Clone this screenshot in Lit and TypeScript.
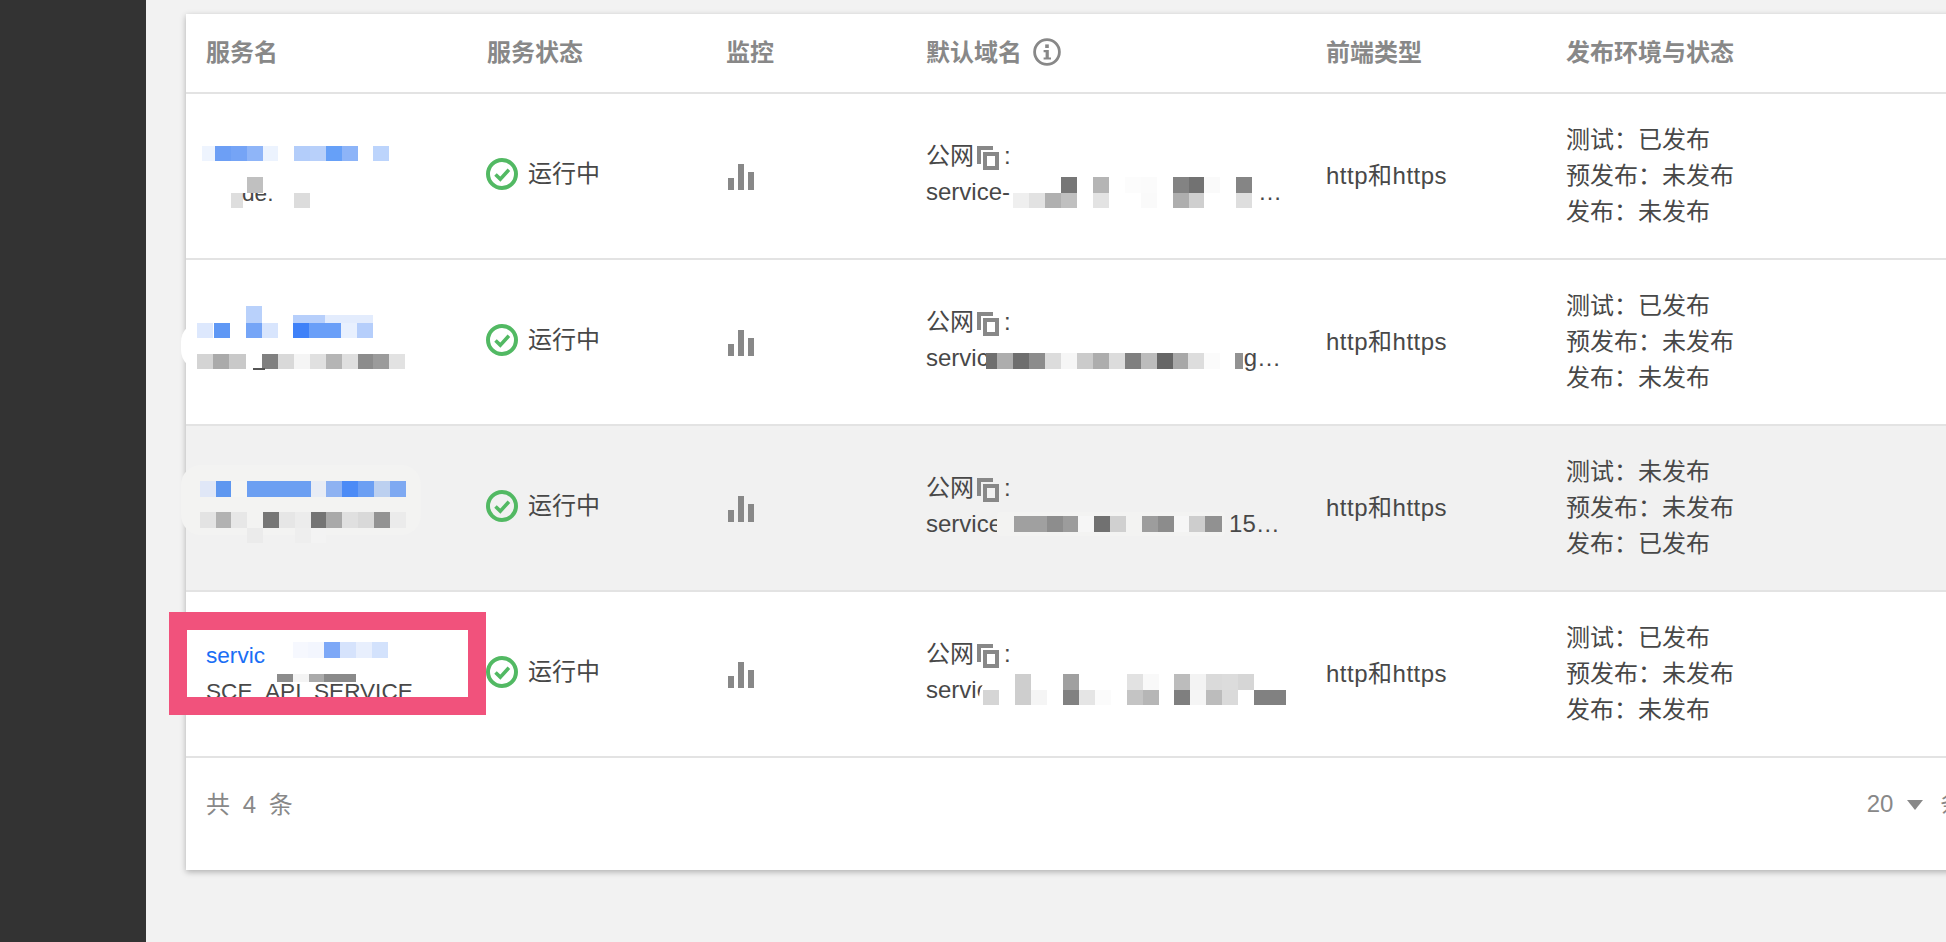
import { LitElement, html, css } from "lit";
import { customElement } from "lit/decorators.js";

type Block = [number, number, number, number, string, string?];

// helper: a strip of same-height mosaic blocks, in page coordinates
const strip = (y: number, h: number, cells: [number, number, string][]): Block[] =>
  cells.map(([x1, x2, c]) => [x1, y, x2 - x1, h, c] as Block);

interface Row {
  top: number;
  state: [string, string, string];
  hover?: boolean;
  domain: string;
  gap: number;
  tail: string;
  name?: unknown;
  blocks: Block[];
  extra?: unknown;
}

const ROWS: Row[] = [
  {
    top: 94,
    state: ["已发布", "未发布", "未发布"],
    domain: "service-",
    gap: 248,
    tail: "…",
    blocks: [
      ...strip(146, 15, [
        [202, 215, "#eef4fe"], [215, 231, "#6d9ff5"], [231, 247, "#75a4f6"], [247, 263, "#8fb5f8"],
        [263, 278, "#ecf3fe"], [294, 310, "#b3cdfa"], [310, 326, "#b8d0fa"], [326, 342, "#66a0f8"],
        [342, 358, "#8db4f8"], [373, 389, "#bcd4fc"],
      ]),
      ...strip(177, 16, [[247, 263, "#c0c0c0"]]),
      ...strip(193, 15, [[231, 243, "#dedede"], [294, 310, "#dcdcdc"]]),
      ...strip(177, 16, [
        [1061, 1077, "#777777"], [1093, 1109, "#b5b5b5"], [1125, 1141, "#fcfcfc"], [1141, 1157, "#fbfbfb"],
        [1173, 1189, "#838383"], [1189, 1204, "#727272"], [1204, 1220, "#fafafa"], [1236, 1252, "#858585"],
      ]),
      ...strip(193, 15, [
        [1013, 1029, "#efefef"], [1029, 1045, "#e2e2e2"], [1045, 1061, "#b0b0b0"], [1061, 1077, "#c0c0c0"],
        [1093, 1109, "#e3e3e3"], [1141, 1157, "#fafafa"], [1173, 1189, "#aeaeae"], [1189, 1204, "#cfcfcf"],
        [1236, 1252, "#dedede"],
      ]),
    ],
    extra: html`<span class="frag" style="left:${242 - 186}px;top:${193 - 94}px">de.</span>`,
  },
  {
    top: 260,
    state: ["已发布", "未发布", "未发布"],
    domain: "servic",
    gap: 255,
    tail: "g…",
    blocks: [
      [181, 322, 40, 48, "#ffffff", "20px"],
      ...strip(306, 17, [[246, 262, "#b9d1fb"]]),
      ...strip(315, 8, [[293, 325, "#b7cffb"], [325, 373, "#e3ecfd"]]),
      ...strip(323, 15, [
        [197, 213, "#dde8fd"], [214, 230, "#5f98f5"], [246, 262, "#75a5f7"], [262, 278, "#d8e5fd"],
        [293, 309, "#3f81f8"], [309, 341, "#6a9ff8"], [341, 357, "#e8f0fe"], [357, 373, "#b5cefb"],
      ]),
      ...strip(354, 15, [
        [197, 213, "#d4d4d4"], [213, 229, "#aaaaaa"], [229, 246, "#c9c9c9"], [262, 278, "#808080"],
        [278, 294, "#d9d9d9"], [294, 310, "#f5f5f5"], [310, 326, "#e0e0e0"], [326, 342, "#b5b5b5"],
        [342, 358, "#dfdfdf"], [358, 373, "#8c8c8c"], [373, 389, "#9b9b9b"], [389, 405, "#e2e2e2"],
      ]),
      [253, 368, 12, 2, "#555555"],
      ...strip(353, 16, [
        [986, 997, "#6f6f6f"], [997, 1013, "#adadad"], [1013, 1029, "#6e6e6e"], [1029, 1045, "#8c8c8c"],
        [1045, 1061, "#dcdcdc"], [1061, 1077, "#f6f6f6"], [1077, 1093, "#cbcbcb"], [1093, 1109, "#adadad"],
        [1109, 1125, "#dcdcdc"], [1125, 1141, "#7f7f7f"], [1141, 1157, "#bcbcbc"], [1157, 1173, "#666666"],
        [1173, 1188, "#a8a8a8"], [1188, 1204, "#dddddd"], [1204, 1220, "#fbfbfb"], [1235, 1243, "#929292"],
      ]),
    ],
  },
  {
    top: 426,
    state: ["未发布", "未发布", "已发布"],
    hover: true,
    domain: "service",
    gap: 227,
    tail: "15…",
    blocks: [
      [181, 465, 240, 70, "#f3f3f2", "20px"],
      ...strip(481, 16, [
        [200, 216, "#e0e7f7"], [216, 231, "#5e97f0"], [231, 247, "#f5f5f3"], [247, 311, "#6c9ff2"],
        [311, 326, "#e8ecf5"], [326, 342, "#8eb2f2"], [342, 358, "#4c8bf6"], [358, 374, "#6c9ff3"],
        [374, 390, "#bcd0f0"], [390, 406, "#7ea9f2"],
      ]),
      ...strip(512, 16, [
        [200, 216, "#e3e3e3"], [216, 231, "#b2b2b2"], [231, 247, "#e7e7e7"], [263, 279, "#767676"],
        [279, 295, "#e6e6e6"], [295, 311, "#ececec"], [311, 326, "#747474"], [326, 342, "#a9a9a9"],
        [342, 358, "#e0e0e0"], [358, 374, "#d9d9d9"], [374, 390, "#939393"], [390, 406, "#ebebeb"],
      ]),
      ...strip(528, 15, [[247, 263, "#ebebeb"], [295, 311, "#eeeeee"], [311, 326, "#f3f3f3"]]),
      [997, 512, 228, 24, "#f3f3f2", "4px"],
      ...strip(516, 16, [
        [1014, 1047, "#a0a0a0"], [1047, 1063, "#8d8d8d"], [1063, 1078, "#9c9c9c"], [1078, 1094, "#f6f6f6"],
        [1094, 1110, "#717171"], [1110, 1126, "#d0d0d0"], [1142, 1158, "#9d9d9d"], [1158, 1174, "#8c8c8c"],
        [1174, 1189, "#f6f6f6"], [1189, 1205, "#cdcdcd"], [1205, 1222, "#919191"],
      ]),
    ],
  },
  {
    top: 592,
    state: ["已发布", "未发布", "未发布"],
    domain: "servic",
    gap: 0,
    tail: "",
    name: html`<a class="link">servic</a><span class="type">SCE_API_SERVICE</span>`,
    blocks: [
      ...strip(642, 16, [
        [293, 308, "#f6f8fe"], [308, 324, "#f3f6fe"], [324, 340, "#7da8f7"], [340, 356, "#d6e3fc"],
        [356, 372, "#e8effd"], [372, 388, "#d3e2fc"],
      ]),
      ...strip(674, 8, [[277, 293, "#8c8c8c"], [293, 309, "#f4f4f4"], [309, 324, "#aaaaaa"], [324, 356, "#8a8a8a"]]),
      [979, 672, 60, 34, "#ffffff", "26px 0 0 0"],
      ...strip(674, 16, [
        [1015, 1031, "#cecece"], [1063, 1079, "#a0a0a0"], [1127, 1143, "#e2e2e2"], [1143, 1159, "#f9f9f9"],
        [1174, 1190, "#bcbcbc"], [1190, 1206, "#f3f3f3"], [1206, 1222, "#dadada"], [1222, 1238, "#dcdcdc"],
        [1238, 1254, "#d6d6d6"],
      ]),
      ...strip(690, 15, [
        [983, 999, "#d5d5d5"], [1015, 1031, "#cecece"], [1031, 1047, "#f5f5f5"], [1063, 1079, "#818181"],
        [1079, 1095, "#e5e5e5"], [1095, 1111, "#fbfbfb"], [1127, 1143, "#c4c4c4"], [1143, 1159, "#b6b6b6"],
        [1174, 1190, "#7f7f7f"], [1190, 1206, "#f5f5f5"], [1206, 1222, "#bcbcbc"], [1222, 1238, "#dadada"],
        [1254, 1286, "#818181"],
      ]),
    ],
    extra: html`<div class="callout"></div>`,
  },
];

const checkIcon = html`<svg class="check" width="32" height="32" viewBox="0 0 32 32">
  <circle cx="16" cy="16" r="14" fill="none" stroke="#52b963" stroke-width="4"></circle>
  <path d="M9.5 16.5l4.8 4.6 8.6-9.4" fill="none" stroke="#52b963" stroke-width="3.6"></path>
</svg>`;

const barsIcon = html`<svg width="28" height="26" viewBox="0 0 28 26" fill="#888888">
  <rect x="1" y="14" width="6" height="12"></rect>
  <rect x="11" y="0" width="6" height="26"></rect>
  <rect x="21" y="8" width="6" height="18"></rect>
</svg>`;

const copyIcon = html`<svg class="copy" width="22" height="24" viewBox="0 0 22 24" fill="#888888">
  <path d="M0 0h16v4H4v14H0z"></path>
  <path fill-rule="evenodd" d="M6 6h16v18H6zM10 10v10h8V10z"></path>
</svg>`;

const infoIcon = html`<svg class="info" width="28" height="28" viewBox="0 0 28 28">
  <circle cx="14" cy="14" r="12.4" fill="none" stroke="#888888" stroke-width="2.8"></circle>
  <rect x="12.2" y="6.4" width="3.6" height="3.6" fill="#888888"></rect>
  <path d="M10.6 12h5.2v7.4h2.2v2.2h-7.4v-2.2h2v-5.2h-2z" fill="#888888"></path>
</svg>`;

@customElement("app-root")
export class AppRoot extends LitElement {
  static styles = css`
    :host {
      display: flex;
      width: 1946px;
      height: 942px;
      overflow: hidden;
      background: #f2f2f2;
      color: #484848;
      font-family: "Liberation Sans", "Noto Sans CJK SC", sans-serif;
      font-size: 24px;
      line-height: 36px;
    }
    .side {
      flex: none;
      width: 146px;
      background: #333333;
    }
    .main {
      flex: none;
      padding: 14px 0 0 40px;
    }
    .card {
      width: 1830px;
      height: 856px;
      background: #ffffff;
      box-shadow: 0 2px 6px rgba(0, 0, 0, 0.28);
    }
    .grid {
      display: grid;
      grid-template-columns: 281px 239px 200px 400px 240px 1fr;
      border-bottom: 2px solid #e3e3e3;
    }
    .head {
      height: 78px;
      font-weight: bold;
      color: #888888;
      align-items: center;
    }
    .cell {
      padding-left: 20px;
      display: flex;
      align-items: center;
      min-width: 0;
    }
    .info {
      margin-left: 11px;
      margin-top: -2px;
    }
    .row {
      position: relative;
      height: 164px;
    }
    .row.hover {
      background: #f1f1f1;
    }
    .stack {
      flex-direction: column;
      align-items: flex-start;
      justify-content: center;
    }
    .name {
      font-size: 22.6px;
    }
    .link {
      color: #1a6ef5;
    }
    .type {
      white-space: nowrap;
    }
    .status {
      padding-bottom: 5px;
    }
    .check {
      margin-right: 10px;
      margin-left: -1px;
    }
    .bars {
      padding-top: 2px;
      padding-left: 21px;
    }
    .line {
      display: flex;
      align-items: center;
      white-space: nowrap;
    }
    .pub {
      margin-top: -4px;
    }
    .copy {
      margin-left: 3px;
      margin-right: 5px;
      margin-top: 3px;
    }
    .http {
      letter-spacing: 0.5px;
    }
    .layer {
      position: absolute;
      inset: 0;
      pointer-events: none;
    }
    .block {
      position: absolute;
    }
    .frag {
      position: absolute;
      width: 34px;
      height: 10px;
      font-size: 22.6px;
      line-height: 2px;
      overflow: hidden;
    }
    .callout {
      position: absolute;
      left: -17px;
      top: 20px;
      width: 317px;
      height: 103px;
      box-sizing: border-box;
      border: 18px solid #f1527c;
    }
    .foot {
      display: flex;
      justify-content: space-between;
      padding: 29px 21px 0 20px;
      color: #888888;
    }
    .total {
      word-spacing: 6px;
    }
    .pager {
      display: flex;
      align-items: center;
      height: 36px;
      margin-top: -1px;
    }
    .caret {
      width: 0;
      height: 0;
      margin: 2px 17px 0 14px;
      border-left: 8px solid transparent;
      border-right: 8px solid transparent;
      border-top: 10px solid #888888;
    }
  `;

  render() {
    return html`
      <div class="side"></div>
      <div class="main">
        <div class="card">
          <div class="grid head">
            <div class="cell">服务名</div>
            <div class="cell">服务状态</div>
            <div class="cell">监控</div>
            <div class="cell">默认域名${infoIcon}</div>
            <div class="cell">前端类型</div>
            <div class="cell">发布环境与状态</div>
          </div>
          ${ROWS.map(
            (r) => html`
              <div class="grid row ${r.hover ? "hover" : ""}">
                <div class="cell stack name">${r.name ?? ""}</div>
                <div class="cell status">${checkIcon}运行中</div>
                <div class="cell bars">${barsIcon}</div>
                <div class="cell stack pub">
                  <div class="line">公网${copyIcon}:</div>
                  <div class="line">
                    ${r.domain}<span style="width:${r.gap}px"></span>${r.tail}
                  </div>
                </div>
                <div class="cell http">http和https</div>
                <div class="cell stack">
                  <div class="line">测试：${r.state[0]}</div>
                  <div class="line">预发布：${r.state[1]}</div>
                  <div class="line">发布：${r.state[2]}</div>
                </div>
                <div class="layer">
                  ${r.blocks.map(
                    ([x, y, w, h, c, rad]) => html`<div
                      class="block"
                      style="left:${x - 186}px;top:${y - r.top}px;width:${w}px;height:${h}px;background:${c};border-radius:${rad ?? 0}"
                    ></div>`
                  )}
                  ${r.extra ?? ""}
                </div>
              </div>
            `
          )}
          <div class="foot">
            <div class="total">共 4 条</div>
            <div class="pager">20<span class="caret"></span>条/页</div>
          </div>
        </div>
      </div>
    `;
  }
}
